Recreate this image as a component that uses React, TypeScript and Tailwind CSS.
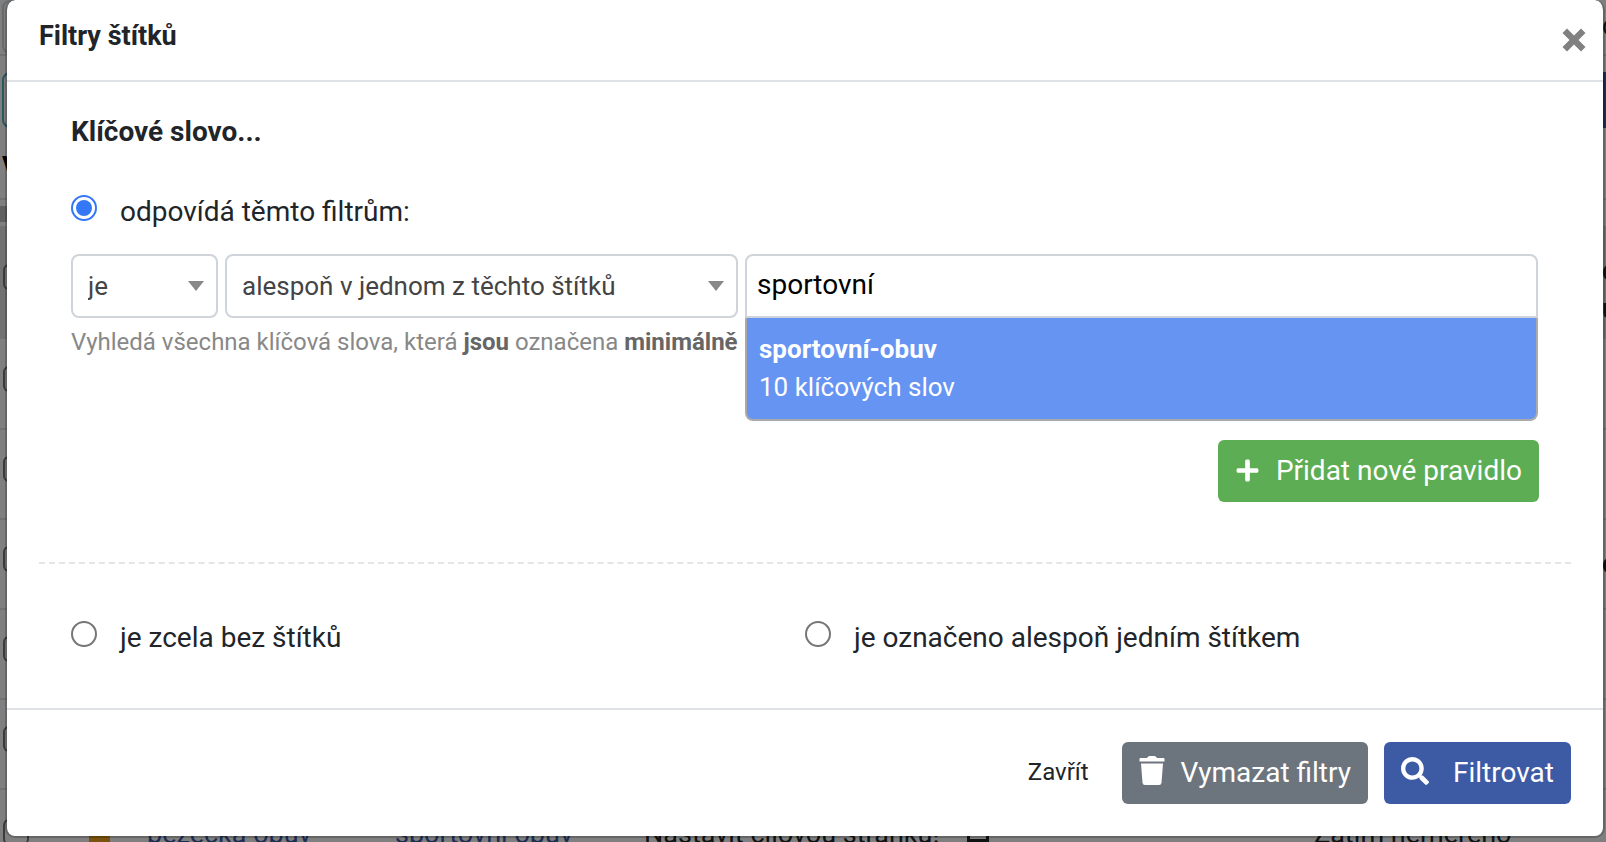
import { useState } from "react";
import type { ReactNode } from "react";
import { FaPlus, FaSearch } from "react-icons/fa";

const plainRows = ["", "o", "", ""];

function Caret() {
  return (
    <svg
      viewBox="0 0 16 10"
      aria-hidden="true"
      className="pointer-events-none absolute right-[14px] top-1/2 h-[10px] w-4 -translate-y-1/2 fill-[#888888]"
    >
      <path d="M0 0h16L8 10z" />
    </svg>
  );
}

function SelectBox({ label, options, className }: { label: string; options: string[]; className: string }) {
  return (
    <div className={`relative h-16 ${className}`}>
      <select
        aria-label={label}
        className="h-full w-full appearance-none rounded-lg border-2 border-[#ced4da] bg-white pl-[15px] pr-10 text-[26px] text-[#444444] outline-none"
      >
        {options.map((option) => (
          <option key={option}>{option}</option>
        ))}
      </select>
      <Caret />
    </div>
  );
}

function RadioOption({
  value,
  selected,
  onSelect,
  children,
}: {
  value: string;
  selected: string;
  onSelect: (value: string) => void;
  children: ReactNode;
}) {
  const checked = selected === value;
  return (
    <label className="flex items-start gap-[23px] text-[28px] leading-[42px]">
      <span className="relative mt-1 h-[26px] w-[26px] shrink-0">
        <input
          type="radio"
          name="mode"
          value={value}
          checked={checked}
          onChange={() => onSelect(value)}
          className="block h-[26px] w-[26px] appearance-none rounded-full border-2 border-[#767676] bg-white checked:border-[#3478f6]"
        />
        {checked && (
          <span className="pointer-events-none absolute inset-[5px] rounded-full bg-[#3478f6]" />
        )}
      </span>
      <span>{children}</span>
    </label>
  );
}

function RowCheckbox() {
  return (
    <input
      type="checkbox"
      aria-label="Vybrat řádek"
      className="ml-[3px] h-[26px] w-[26px] shrink-0 appearance-none rounded-md border-2 border-[#767676] bg-white"
    />
  );
}

function BackgroundPage() {
  return (
    <div aria-hidden="true" className="flex h-screen flex-col overflow-hidden bg-white text-[27px] text-[#212529]">
      <div className="flex h-14 shrink-0 items-start justify-between border-b-2 border-[#dee2e6]">
        <div className="ml-0.5 h-[54px] w-96 rounded-lg border-2 border-[#ced4da]" />
        <div className="w-1 overflow-hidden pt-2 leading-9">c</div>
      </div>
      <div className="mt-4 flex h-14 shrink-0 justify-between">
        <div className="ml-0.5 w-96 rounded-lg border-2 border-[#4fb0bd]" />
        <div className="w-[3px] bg-[#3d5ba5]" />
      </div>
      <div className="flex h-[72px] shrink-0 items-center border-b-2 border-[#dee2e6] pl-0.5 pt-2 font-bold text-black">
        Vše
      </div>
      <div className="mr-8 mt-1.5 h-4 shrink-0 bg-[#c0c0c0]" />
      <div className="mt-1 flex h-[113px] shrink-0 items-start justify-between bg-[#e2e2e2] pt-[38px]">
        <RowCheckbox />
        <div className="w-1 overflow-hidden font-bold leading-[38px] -mt-3">
          c<br />u
        </div>
      </div>
      <div className="flex h-[91px] shrink-0 items-start border-b-2 border-[#dee2e6] pt-[27px]">
        <RowCheckbox />
      </div>
      {plainRows.map((edge, row) => (
        <div
          key={row}
          className="flex h-[90px] shrink-0 items-start justify-between border-b-2 border-[#dee2e6] pt-[26px]"
        >
          <RowCheckbox />
          <div className="w-1 overflow-hidden font-bold leading-9">{edge}</div>
        </div>
      ))}
      <div className="flex h-[90px] shrink-0 items-start pt-[26px]">
        <div className="w-[89px] shrink-0">
          <RowCheckbox />
        </div>
        <div className="h-8 w-[21px] shrink-0 bg-[#f5a623]" />
        <div className="w-[285px] shrink-0 pl-[37px] leading-9 text-[#3d5ba5]">běžecká obuv</div>
        <div className="w-[249px] shrink-0 leading-9 text-[#3d5ba5]">sportovní obuv</div>
        <div className="w-[323px] shrink-0 leading-9">Nastavit cílovou stránku!</div>
        <div className="h-[26px] w-[22px] shrink-0 border-[3px] border-[#212529]" />
        <div className="ml-auto w-[292px] shrink-0 leading-9">Zatím neměřeno</div>
      </div>
    </div>
  );
}

export default function App() {
  const [mode, setMode] = useState("filters");
  const [tag, setTag] = useState("sportovní");

  return (
    <div className="relative h-screen overflow-hidden font-['Roboto','Liberation_Sans',sans-serif] text-[#212529]">
      <BackgroundPage />
      <div className="absolute inset-0 bg-black/50 pl-[5px] pr-px">
        <form
          role="dialog"
          aria-labelledby="dialog-title"
          onSubmit={(event) => event.preventDefault()}
          className="rounded-[10px] border-x-2 border-b-2 border-black/20 bg-white bg-clip-padding"
        >
          <header className="flex h-[82px] items-start justify-between border-b-2 border-[#dee2e6] pl-8 pr-[17px]">
            <h1 id="dialog-title" className="pt-4 text-[27px] font-bold leading-10">
              Filtry štítků
            </h1>
            <button type="button" aria-label="Zavřít dialog" className="pt-7">
              <svg viewBox="0 0 24 24" className="h-6 w-6 fill-[#808080]" aria-hidden="true">
                <path d="M5 .5 12 7.500 19 .5 23.500 5 16.500 12 23.500 19 19 23.500 12 16.500 5 23.500 .5 19 7.500 12 .5 5z" />
              </svg>
            </button>
          </header>

          <section className="mx-8 border-b-2 border-dashed border-[#e5e5e5] px-8 pb-[60px] pt-[29px]">
            <h2 className="text-[28px] font-bold leading-[42px]">Klíčové slovo...</h2>
            <div className="mt-[38px]">
              <RadioOption value="filters" selected={mode} onSelect={setMode}>
                odpovídá těmto filtrům:
              </RadioOption>
            </div>
            <div className="mt-[21px] flex gap-[7px]">
              <SelectBox label="Podmínka" options={["je", "není"]} className="w-[147px] shrink-0" />
              <SelectBox
                label="Rozsah štítků"
                options={["alespoň v jednom z těchto štítků", "ve všech těchto štítcích"]}
                className="w-[513px] shrink-0"
              />
              <div className="relative mr-px h-16 grow">
                <input
                  type="text"
                  aria-label="Štítek"
                  value={tag}
                  onChange={(event) => setTag(event.target.value)}
                  className="block h-full w-full rounded-t-lg border-2 border-[#ced4da] bg-white px-2.5 pb-1 text-[28px] text-black outline-none"
                />
                <ul
                  role="listbox"
                  aria-label="Nalezené štítky"
                  className="absolute inset-x-0 top-full z-10 rounded-b-lg border-2 border-t-0 border-[#aaaaaa] bg-[#6694f3] text-[26px] leading-[38px] text-white"
                >
                  <li role="option" aria-selected="true" className="px-3 pb-[13px] pt-3">
                    <b className="block">sportovní-obuv</b>
                    <span className="block">10 klíčových slov</span>
                  </li>
                </ul>
              </div>
            </div>
            <p className="mt-1.5 h-9 overflow-hidden text-[24px] leading-9 text-[#888888]">
              Vyhledá všechna klíčová slova, která <b className="text-[#666666]">jsou</b> označena{" "}
              <b className="text-[#666666]">minimálně</b>
            </p>
            <div className="mt-20 flex justify-end">
              <button
                type="button"
                className="flex h-[62px] items-center gap-4 rounded-md bg-[#5cad54] px-[17px] text-[28px] text-white"
              >
                <FaPlus className="mb-0.5 h-[25px] w-[25px]" />
                Přidat nové pravidlo
              </button>
            </div>
          </section>

          <section className="grid grid-cols-[734px_1fr] px-16 pb-[49px] pt-[53px]">
            <RadioOption value="none" selected={mode} onSelect={setMode}>
              je zcela bez štítků
            </RadioOption>
            <RadioOption value="any" selected={mode} onSelect={setMode}>
              je označeno alespoň jedním štítkem
            </RadioOption>
          </section>

          <footer className="flex items-center justify-end gap-4 border-t-2 border-[#dee2e6] px-8 py-8">
            <button type="button" className="px-[17px] pb-0.5 text-[24px]">
              Zavřít
            </button>
            <button
              type="button"
              className="flex h-[62px] items-center gap-4 rounded-md bg-[#6c757d] px-[17px] text-[28px] text-white"
            >
              <svg viewBox="0 0 26 30" className="mb-1 h-[30px] w-[26px] fill-current" aria-hidden="true">
                <path d="M1.500 2h6.500l1-1.200Q9.600 0 10.500 0h5q.900 0 1.500.8L18 2h6.500Q25.500 2 25.500 3v2.500H.5V3Q.5 2 1.500 2zM2 7.500h22l-1.500 19.300Q22.300 29 20 29H6q-2.300 0-2.500-2.200z" />
              </svg>
              Vymazat filtry
            </button>
            <button
              type="submit"
              className="flex h-[62px] items-center gap-6 rounded-md bg-[#3d5ba5] px-[17px] text-[28px] text-white"
            >
              <FaSearch className="mb-1 h-7 w-7" />
              Filtrovat
            </button>
          </footer>
        </form>
      </div>
    </div>
  );
}
